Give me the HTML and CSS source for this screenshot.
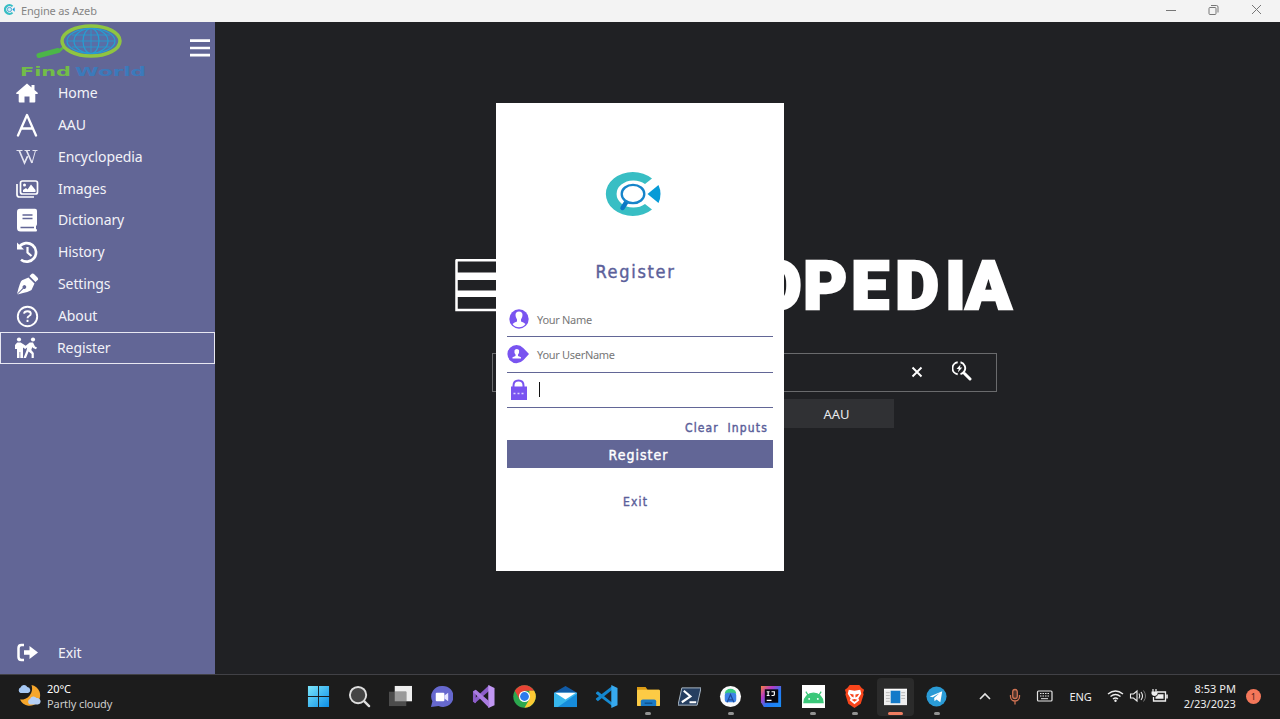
FILE: index.html
```html
<!DOCTYPE html>
<html lang="en">
<head>
<meta charset="utf-8">
<title>Engine as Azeb</title>
<link rel="stylesheet" href="styles.css">
</head>
<body>
<header class="titlebar">
  <svg class="app-icon" viewBox="0 0 56 46" preserveAspectRatio="none"><path d="M47 7A28 22.500 0 1 0 47 39L40 33A17 13.500 0 1 1 40 13Z" fill="#38bec4"/><ellipse cx="28" cy="23" rx="11" ry="9" fill="#cfeef5" stroke="#1680c8" stroke-width="3"/><path d="M43 23L54 14V32Z" fill="#0a9bd8"/></svg>
  <span class="app-name">Engine as Azeb</span>
  <svg class="win-controls" viewBox="0 0 110 22" fill="none" stroke="#777" stroke-width="1"><path d="M6 10.500h10"/><rect x="49" y="7.500" width="7" height="7" rx="1"/><path d="M51 5.500h5.500q1.500 0 1.500 1.500v5.500"/><path d="M92 5l9 9M101 5l-9 9"/></svg>
</header>

<main class="workspace">
  <aside class="sidebar">
    <div class="brand">
      <svg class="brand-logo" viewBox="0 0 140 56">
        <path d="M53 24L46 30" stroke="#5cb947" stroke-width="2.500"/>
        <path d="M27 33.500L46 28.500" stroke="#4cb648" stroke-width="5" stroke-linecap="round"/>
        <ellipse cx="79" cy="19" rx="29" ry="15" fill="#596ea6" stroke="#8fc541" stroke-width="3.500"/>
        <g fill="none" stroke="#259fd2" stroke-width="1.200"><ellipse cx="79" cy="19" rx="24" ry="12.500"/><ellipse cx="79" cy="19" rx="17" ry="12.500"/><ellipse cx="79" cy="19" rx="8" ry="12.500"/><path d="M79 6v26M55 19h48M60 13h38M60 25h38" stroke-width=".8"/></g>
        <text x="8" y="53.500" textLength="51" lengthAdjust="spacingAndGlyphs" class="logo-text green">Find</text>
        <text x="63" y="53.500" textLength="71" lengthAdjust="spacingAndGlyphs" class="logo-text blue">World</text>
      </svg>
      <svg class="burger" viewBox="0 0 20 18"><path d="M0 1.700h20M0 9h20M0 16.200h20" stroke="#fff" stroke-width="2.700"/></svg>
    </div>
    <nav class="menu">
      <a class="item"><svg viewBox="0 0 24 24"><path d="M12 2.500L1 12q0 1 1 1H3.700V20.500q0 1 1 1H9.500v-6h5v6h4.800q1 0 1-1V13H22q1 0 1-1L19.500 9V4h-3v2.500Z" fill="#fff"/></svg><span>Home</span></a>
      <a class="item"><svg viewBox="0 0 24 24" fill="none" stroke="#fff" stroke-width="2.300" stroke-linejoin="round" stroke-linecap="round"><path d="M3 22.500L12 2L21 22.500M6 15.500h12"/></svg><span>AAU</span></a>
      <a class="item"><svg viewBox="0 0 24 24" fill="none" stroke="#e4e4f0"><path d="M1.500 5.500h6M9.500 5.500h5.500M17.500 5.500h5"/><path d="M4.200 5.500L9.500 18L12.500 11.500M11.500 5.500L17 18" stroke-width="1.700"/><path d="M12.500 11L9.500 18M20.500 5.500L17 18"/></svg><span>Encyclopedia</span></a>
      <a class="item"><svg viewBox="0 0 24 24" fill="none" stroke="#fff" stroke-width="1.700"><rect x="5.500" y="4" width="17" height="13" rx="2"/><path d="M2 7v10.500q0 2.500 2.500 2.500H19"/><circle cx="9.500" cy="8" r="1.500" fill="#fff" stroke="none"/><path d="M8 15v-2l3-2 1.500 1.500L16 7.500l4.500 5.500v2Z" fill="#fff" stroke="none"/></svg><span>Images</span></a>
      <a class="item"><svg viewBox="0 0 24 24"><path d="M5 .8H20q2 0 2 2V16q0 1.500-1 2v3q1 0 1 1.200t-1 1.300H5.500Q2 23.500 2 20V4Q2 .8 5 .8Z" fill="#fff"/><path d="M7.500 7h10M7.500 10.500h10M5.500 19.500H19" stroke="#626696" stroke-width="1.500"/></svg><span>Dictionary</span></a>
      <a class="item"><svg viewBox="0 0 24 24" fill="none" stroke="#fff" stroke-width="2.700"><path d="M4.500 6.500A9.300 9.300 0 1 1 6 19.700"/><path d="M2 2.500V9.500h7Z" fill="#fff" stroke="none"/><path d="M12.500 7v5.500l4 3.500" stroke-width="2.200"/></svg><span>History</span></a>
      <a class="item"><svg viewBox="0 0 24 24"><path d="M16 2.500q1.500-2 3.500 0l3 3q1.500 2-.5 3l-1.500 1.500-6-6Z" fill="#fff"/><path d="M13.500 5.500L19.500 11.500L16.500 18Q15 19.500 2.500 22.500L8.500 16.700A1.900 1.900 0 1 0 7.700 15.900L2 22Q5 9.500 7 8.300Z" fill="#fff"/></svg><span>Settings</span></a>
      <a class="item"><svg viewBox="0 0 24 24" fill="none" stroke="#fff" stroke-width="1.900"><circle cx="12.500" cy="12.500" r="9.700"/><path d="M9 9.700q.4-2.500 3.500-2.500 3.300 0 3.300 2.500 0 1.500-1.700 2.300-1.600.8-1.600 2.300"/><path d="M12.500 15.800v2.200"/></svg><span>About</span></a>
      <a class="item selected"><svg viewBox="0 0 24 24" fill="#fff"><circle cx="5" cy="3.500" r="2.100"/><circle cx="19" cy="3.500" r="2.100"/><path d="M3.200 6.500h3.500l5 3.300 4-3.300H19l2 4 2 1-1 1.700-3-1.300-.7-1-1 3.100 2.500 3V22h-2.200v-4l-3-2.500L12 22H9.500l3-7.500.7-3-2 1.500L9 11.500V22H6.300v-6h-.8v6H3v-9H1V9Z"/></svg><span>Register</span></a>
    </nav>
    <a class="item logout"><svg viewBox="0 0 24 24"><path d="M9 4H6.500Q3.500 4 3.500 7v9q0 3 3 3H9" fill="none" stroke="#fff" stroke-width="2.500"/><path d="M9 9.200h5.500V5L23 11.500L14.500 18v-4.200H9Z" fill="#fff"/></svg><span>Exit</span></a>
  </aside>

  <section class="page">
    <svg class="headline" viewBox="0 0 560 56">
      <path d="M1.500 1.500V52H44" fill="none" stroke="#fff" stroke-width="2.500"/>
      <path d="M1 1h43v2.500H1zM1 14.500h43v7.500H1zM1 32.500h43v6.500H1zM1 51h43v2H1z" fill="#fff"/>
      <text y="51" x="300 348.200 396.200 440.200 490.200 510.500" class="headline-text">OPEDIA</text>
    </svg>
    <div class="search">
      <svg class="clear-x" viewBox="0 0 12 12"><path d="M1.500 1.500l9 9M10.500 1.500l-9 9" stroke="#fff" stroke-width="1.900"/></svg>
      <svg class="find" viewBox="0 0 20 20" fill="none" stroke="#fff"><path d="M5.700 1.300A6 6 0 0 0 5.700 13.200M8.500 1.300A6 6 0 0 1 12.300 10.300Q11 12.500 8.500 13.200" stroke-width="1.900"/><path d="M12.500 12.500l5.500 5.500" stroke-width="3" stroke-linecap="round"/><path d="M8.500 3.500L4.500 8h2.300l-1 3.500L10.300 6.500H8Z" fill="#fff" stroke="none"/></svg>
    </div>
    <div class="buttons"><button class="source">AAU</button></div>
  </section>

  <form class="dialog">
    <svg class="dialog-logo" viewBox="0 0 56 46"><path d="M47 7.500A27 22 0 1 0 47 38.500L40 33A17 13.500 0 1 1 40 13Z" fill="#38bec4"/><path d="M22 30L17.500 37" stroke="#0b79c5" stroke-width="4.500" stroke-linecap="round"/><ellipse cx="28" cy="23" rx="11.300" ry="9.200" fill="#fff" stroke="#1684ca" stroke-width="2.300"/><path d="M42.500 23L53.500 14Q57.500 23 53.500 32Z" fill="#079bd7"/></svg>
    <h1 class="dialog-title">Register</h1>
    <label class="field"><svg viewBox="0 0 22 22"><circle cx="12" cy="11" r="9.700" fill="#7954f0"/><path d="M5.500 16q2-2 4.500-2.500v-2Q8.500 9.500 8.500 7q0-3.500 3.500-3.500T15.500 7q0 2.500-1.500 4.500v2q2.500.5 4.500 2.500-2.500 3.300-6.500 3.300T5.500 16Z" fill="#fff"/></svg><span>Your Name</span></label>
    <label class="field"><svg viewBox="0 0 22 22"><path d="M9.500 2q4 0 7 3.200L22 11l-5.500 6q-3 3.200-7 3.200a9.100 9.100 0 0 1 0-18.200Z" fill="#7954f0"/><path d="M5.500 15.500v-1.200l3-1.300v-1.500Q7 9.500 7.500 7.500 7.800 6 9.800 6q2 0 2.300 1.500.4 2-1.100 4V13l3 1.300v1.200Z" fill="#fff"/></svg><span>Your UserName</span></label>
    <label class="field"><svg viewBox="0 0 22 22"><path d="M6.500 9V6.500Q6.500 1.500 11.500 1.500t5 5V9" fill="none" stroke="#7954f0" stroke-width="2"/><rect x="4" y="7.500" width="16" height="13.500" fill="#7954f0"/><path d="M6.500 14.500h2M10.500 14.500h2M14.500 14.500h2" stroke="#ddd2ff" stroke-width="1.700"/></svg><i class="caret"></i></label>
    <span class="clear-link">Clear Inputs</span>
    <button type="button" class="submit">Register</button>
    <span class="close-link">Exit</span>
  </form>
</main>

<footer class="taskbar">
  <div class="weather">
    <svg viewBox="0 0 24 22"><path d="M14.500 1A10.500 10.500 0 1 1 3 15.500 11 11 0 0 0 14.500 1Z" fill="#f6a62b"/><path d="M3.500 9a3 3 0 0 1 0-5.500 3.700 3.700 0 0 1 6.800-.4A3 3 0 0 1 11 9Z" fill="#a6c8f4"/><path d="M13 20.500a3 3 0 0 1 0-5.600 3.700 3.700 0 0 1 6.500-.8 3.200 3.200 0 0 1 1.500 6.400Z" fill="#b5d0f6"/></svg>
    <div><div class="strong">20°C</div><div>Partly cloudy</div></div>
  </div>
  <div class="apps">
    <div class="app"><svg viewBox="0 0 24 24"><defs><linearGradient id="w" gradientUnits="userSpaceOnUse" x1="1" y1="1" x2="23" y2="23"><stop stop-color="#7be6fb"/><stop offset="1" stop-color="#0c8ee8"/></linearGradient></defs><path d="M1 1h10.500v10.500H1zM12.500 1H23v10.500H12.500zM1 12.500h10.500V23H1zM12.500 12.500H23V23H12.500z" fill="url(#w)"/></svg></div>
    <div class="app"><svg viewBox="0 0 24 24"><circle cx="10.500" cy="10.500" r="8.500" fill="#444" stroke="#dedede" stroke-width="2"/><path d="M17 17l5 5" stroke="#dedede" stroke-width="2.500" stroke-linecap="round"/></svg></div>
    <div class="app"><svg viewBox="0 0 24 24"><rect x="6" y="1" width="18" height="16" fill="#eee"/><rect x="0" y="7" width="18" height="15" fill="#4c4c4c"/><rect x="6" y="7" width="12" height="10" fill="#9a9a9a"/></svg></div>
    <div class="app"><svg viewBox="0 0 24 24"><path d="M13 1a11 11 0 1 1-4 21L1 23l1.500-6A11 11 0 0 1 13 1Z" fill="#6668ce"/><rect x="6" y="8" width="9" height="9" rx="1" fill="#fff"/><path d="M15 11l4-3v9l-4-3Z" fill="#e5e4ff"/></svg></div>
    <div class="app"><svg viewBox="0 0 24 24"><path d="M1 6.500L4 5v14l-3-1.500Z" fill="#8c5dc9"/><path d="M3 19L18 6V0L1 16Z" fill="#8c5dc9"/><path d="M17 0l6.500 3v18L17 24Z" fill="#c197f3"/><path d="M4 5l14 12v7L1 7Z" fill="#aa7be0"/></svg></div>
    <div class="app"><svg viewBox="0 0 24 24"><circle cx="12" cy="12" r="11.700" fill="#2ca84f"/><path d="M1.900 6.100A11.700 11.700 0 0 1 22.100 6.100H12L7 15Z" fill="#e74335"/><path d="M22.100 6.100A11.700 11.700 0 0 1 12 23.700L17 15V6.100Z" fill="#fcc934"/><circle cx="12" cy="12" r="5.800" fill="#fff"/><circle cx="12" cy="12" r="4.600" fill="#2d7bec"/></svg></div>
    <div class="app"><svg viewBox="0 0 24 24"><path d="M0 8L12 1l12 7v3H0Z" fill="#115ba6"/><path d="M0 8h24v15H0Z" fill="#37b7ed"/><path d="M24 9v14H4Z" fill="#168cdb"/><path d="M1 8h22L12 15Z" fill="#fff"/></svg></div>
    <div class="app"><svg viewBox="0 0 24 24"><path d="M1 8l2-1.500 15 12V22L1 9Z" fill="#168bd2"/><path d="M1 15l2 2L18 5V1L1 14Z" fill="#1486cd"/><path d="M17 0l6.500 3v18L17 24Z" fill="#37a9ee"/></svg></div>
    <div class="app open"><svg viewBox="0 0 24 24"><path d="M0 2h9l2 3h12v8H0Z" fill="#dd9c15"/><rect y="5" width="24" height="17" rx="1" fill="#fccb45"/><path d="M4 22v-5q0-2 2-2h12q2 0 2 2v5Z" fill="#1b7ac5"/><path d="M8 19h8" stroke="#10508c" stroke-width="1.500"/></svg></div>
    <div class="app"><svg viewBox="0 0 24 24"><path d="M4 3h20l-4 18H0Z" fill="#263f61" stroke="#aebcca"/><path d="M6 6l7 6-9 6M12 18h7" fill="none" stroke="#fff" stroke-width="2.200"/></svg></div>
    <div class="app open"><svg viewBox="0 0 24 24"><circle cx="12" cy="12" r="11" fill="#fafafa"/><path d="M6 9a6 5 0 0 1 12 0Z" fill="#37ca81"/><rect x="6" y="8" width="12" height="10" rx="3" fill="#3c83e6"/><path d="M8.500 18l3.500-8 3.500 8M10 15.500h4" fill="none" stroke="#1c4a98" stroke-width="1.300"/></svg></div>
    <div class="app"><svg viewBox="0 0 24 24"><defs><linearGradient id="j" x2="1" y2="1"><stop stop-color="#f5803f"/><stop offset=".3" stop-color="#b83ac3"/><stop offset=".6" stop-color="#2379f4"/><stop offset="1" stop-color="#188ef4"/></linearGradient></defs><path d="M1 1h21v22H4L1 18Z" fill="url(#j)"/><rect x="5" y="4.500" width="14" height="14" fill="#080810"/><path d="M7 7h3M8.500 7v4M7 11h3M12 7h3v3q0 1-1.500 1H12M7 16h5" fill="none" stroke="#fff" stroke-width="1.200"/></svg></div>
    <div class="app open"><svg viewBox="0 0 24 24"><path d="M0 0h24v24H0Z" fill="#fff"/><path d="M2 18.500a10 10 0 0 1 20 0ZM6 10L4 7M18 10l2-3" fill="#3ac779" stroke="#3ac779" stroke-width="1.300"/><circle cx="7.500" cy="14.500" r="1" fill="#fff"/><circle cx="16.500" cy="14.500" r="1" fill="#fff"/></svg></div>
    <div class="app open"><svg viewBox="0 0 24 24"><path d="M7 0h10l2.500 3L22 5l-1 3 .5 2-3 9.500L12 24l-6.500-4.500L2.500 10 3 8 2 5l2.500-2Z" fill="#f8451b"/><path d="M6 5l6 1 6-1 1 4-3 5 1 2-5 4-5-4 1-2-3-5Z" fill="#fff"/><path d="M7 9l4 1v3l-2-1ZM17 9l-4 1v3l2-1ZM9 15.500l3-1 3 1-3 2Z" fill="#f8451b"/></svg></div>
    <div class="app open active"><svg viewBox="0 0 24 24"><rect x="0" y="4" width="24" height="17" fill="#eee"/><path d="M0 4h24v1.500H0Z" fill="#fff"/><rect x="7" y="6" width="10" height="13" fill="#147ac9"/><path d="M2 8h4M2 11h4M2 14h4M2 17h4M18 8h4M18 11h4M18 14h4" stroke="#aaa" stroke-width=".8"/></svg></div>
    <div class="app open"><svg viewBox="0 0 24 24"><circle cx="12" cy="12" r="10.500" fill="#2a9bd6"/><path d="M5 12l13-5.500L16 18l-4-3-2 2-.5-3.500 5.500-5-7 4.300Z" fill="#fff"/></svg></div>
  </div>
  <div class="tray">
    <svg class="tray-icons" viewBox="0 0 84 24" fill="none" stroke="#e5e5e5"><path d="M4 15l5-5 5 5" stroke-width="1.600"/><g stroke="#ce7253" stroke-width="1.300"><rect x="36.700" y="5.500" width="4.600" height="9" rx="2.300" fill="#ce7253" fill-opacity=".3"/><path d="M34.500 11v1.500a4.500 4.500 0 0 0 9 0V11M39 17v3.500"/></g><rect x="61.500" y="7" width="14.500" height="10" rx="1" stroke-width="1.200"/><path d="M64 9.500h10M64 12h10" stroke-dasharray="1.500 1"/><path d="M65 14.700h7"/></svg>
    <span class="lang">ENG</span>
    <svg class="status" viewBox="0 0 64 24" fill="none" stroke="#eee" stroke-width="1.400"><path d="M1 10q7.500-6 15 0M3.500 12.500q5-4 10 0M6 15q2.500-2 5 0"/><circle cx="8.500" cy="16.700" r="1.200" fill="#eee" stroke="none"/><path d="M23.500 10v4h3l3.500 3V7L26.500 10ZM32 9.500q1.500 2.500 0 5M34 8q3 4 0 8" stroke-width="1.100"/><path d="M36.500 6.500q4 5.500 0 11" stroke="#777" stroke-width="1"/><path d="M50 8h8.500v9H46.500v-4" stroke-width="1.300"/><path d="M51 10.300h5.500v4.400H48.500v-2q2 0 2.500-2.400Z" fill="#eee" stroke="none"/><path d="M60 10.500v4" stroke-width="1.600"/><path d="M46 5v3M49 5v3" stroke-width="1.200"/><path d="M44.500 7.500h6V10q-1 2-3 2t-3-2Z" fill="#eee" stroke="none"/></svg>
    <div class="clock"><div>8:53 PM</div><div>2/23/2023</div></div>
    <span class="badge">1</span>
  </div>
</footer>
</body>
</html>
```

FILE: styles.css
```css
* { box-sizing: border-box; }
body { margin: 0; width: 1280px; height: 719px; display: flex; flex-direction: column; overflow: hidden; background: #202124; font-family: "Noto Sans", sans-serif; }
svg { display: block; flex: none; }
button { border: 0; padding: 0; font: inherit; }

.titlebar { height: 21.500px; flex: none; display: flex; align-items: center; background: #f3f3f3; padding-left: 4px; }
.app-icon { width: 11px; height: 11px; margin-top: -2px; }
.app-name { font-size: 11px; letter-spacing: -.15px; color: #858585; margin: -1px 0 0 6px; }
.win-controls { width: 110px; height: 22px; margin-left: auto; margin-right: 10px; }

.workspace { position: relative; height: 652.500px; flex: none; display: flex; }
.sidebar { width: 215px; flex: none; background: #626696; display: flex; flex-direction: column; }
.brand { height: 55.600px; display: flex; justify-content: space-between; padding: 0 5.500px 0 12px; flex: none; }
.brand-logo { width: 140px; height: 56px; }
.burger { width: 20px; height: 18px; margin-top: 17.500px; }
.logo-text { font: bold 13px "DejaVu Sans", sans-serif; }
.green { fill: #72bd48; }
.blue { fill: #3b7abb; }
.item { height: 31.850px; display: flex; align-items: center; gap: 19px; padding-left: 15px; color: #f2f2f8; font-size: 14px; letter-spacing: -.1px; border: 0 solid #e8e8f2; }
.item svg { width: 24px; height: 24px; }
.item span { margin-top: -1px; }
.selected { border-width: 1px; padding-left: 13px; }
.logout { margin-top: auto; margin-bottom: 5.500px; }

.page { flex: 1; display: flex; flex-direction: column; align-items: flex-start; padding-top: 236.500px; }
.headline { width: 560px; height: 56px; margin-left: 239.500px; overflow: visible; }
.headline-text { font: 900 67.500px Roboto, sans-serif; fill: #fff; stroke: #fff; stroke-width: 2.600px; }
.search { width: 505px; height: 39px; margin: 39px 0 0 277px; border: 1px solid #6a6b6d; display: flex; align-items: center; justify-content: flex-end; gap: 29px; padding-right: 24px; }
.clear-x { width: 12px; height: 12px; margin-top: -2px; }
.find { width: 20px; height: 20px; margin-top: -4px; }
.buttons { margin: 7px 0 0 564px; }
.source { width: 115px; height: 29px; background: #303134; color: #e8eaed; font-size: 13px; display: block; }

.dialog { position: absolute; left: 496px; top: 81.500px; width: 288px; height: 468px; background: #fff; padding: 68px 11px 0; display: flex; flex-direction: column; font-family: "DejaVu Sans", sans-serif; color: #5b609a; }
.dialog-logo { width: 56px; height: 46px; margin-left: 98px; }
.dialog-title { margin: 42px 9px 0 0; height: 26px; text-align: center; font: 500 18px/26px "DejaVu Sans Condensed", "DejaVu Sans", sans-serif; letter-spacing: 1.700px; -webkit-text-stroke: .4px; }
.field { height: 35.500px; flex: none; border-bottom: 1px solid #626696; display: flex; align-items: center; font: 11px "Noto Sans", sans-serif; letter-spacing: -.3px; color: #777; }
.field span { margin-top: 1px; }
.dialog-title + .field { margin-top: 16px; height: 36px; }
.field svg { width: 22px; height: 22px; margin-right: 8px; }
.caret { width: 1px; height: 15px; margin-left: 2px; background: #111; }
.clear-link { align-self: flex-end; margin: 10px 5px 0 0; height: 22px; font: 12px/20px "DejaVu Sans Condensed", "DejaVu Sans", sans-serif; letter-spacing: 1.150px; word-spacing: 4px; -webkit-text-stroke: .4px; }
.submit { height: 28px; flex: none; background: #626696; color: #fff; font: 14px/30px "DejaVu Sans Condensed", "DejaVu Sans", sans-serif; letter-spacing: 1px; padding-right: 3px; -webkit-text-stroke: .4px; }
.close-link { align-self: center; margin: 24px 9px 0 0; font: 12px/20px "DejaVu Sans Condensed", "DejaVu Sans", sans-serif; letter-spacing: 1.200px; -webkit-text-stroke: .4px; }

.taskbar { height: 45px; flex: none; display: flex; background: #1c1c1c; border-top: 1px solid #414146; color: #eee; font-size: 11px; }
.weather { width: 297.400px; padding-left: 17px; display: flex; align-items: center; gap: 6px; line-height: 15px; letter-spacing: -.1px; color: #ccc; }
.weather > div { margin-top: -2px; }
.weather svg { width: 24px; height: 22px; margin-top: -4px; }
.weather .strong { color: #fff; }
.apps { display: flex; }
.app { position: relative; width: 41.260px; display: flex; align-items: center; justify-content: center; padding-bottom: 1px; }
.app svg { width: 23px; height: 23px; position: relative; }
.open::after { content: ""; position: absolute; bottom: 4.500px; left: 18px; width: 6px; height: 2.500px; border-radius: 2px; background: #929292; }
.active::before { content: ""; position: absolute; left: 2px; top: 3px; width: 37px; height: 38px; border-radius: 4px; background: #2b2b2b; }
.active::after { left: 13px; width: 15px; background: #ef7e62; }
.tray { flex: 1; display: flex; align-items: center; padding: 0 0 2px 18.500px; }
.tray-icons { width: 84px; height: 24px; }
.lang { margin: 0 0 0 9.500px; width: 38px; }
.status { width: 64px; height: 24px; }
.clock { width: 59px; margin-left: 5.500px; text-align: right; line-height: 15px; }
.badge { width: 15px; height: 15px; margin-left: 10px; border-radius: 50%; background: #f4775a; color: #4a2018; font-size: 9px; line-height: 15px; text-align: center; }
```
